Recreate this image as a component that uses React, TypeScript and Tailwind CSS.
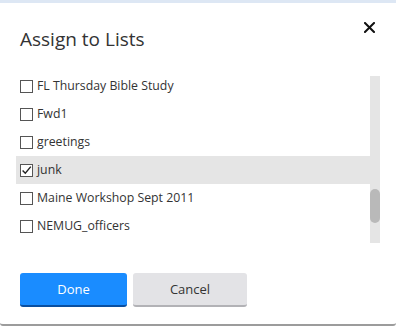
import React from "react";

const items = [
  { label: "FL Thursday Bible Study", checked: false },
  { label: "Fwd1", checked: false },
  { label: "greetings", checked: false },
  { label: "junk", checked: true },
  { label: "Maine Workshop Sept 2011", checked: false },
  { label: "NEMUG_officers", checked: false },
];

function Box({ checked }: { checked: boolean }) {
  return (
    <svg width="13" height="13" viewBox="0 0 13 13" className="shrink-0">
      <rect x="0.5" y="0.5" width="12" height="12" fill="white" stroke="#555" strokeWidth="1" />
      {checked && (
        <path d="M2.6 6.4 L5.3 9.2 L10.8 2.6" fill="none" stroke="#222" strokeWidth="1.4" />
      )}
    </svg>
  );
}

export default function App() {
  return (
    <div
      className="w-[396px] h-[326px] bg-white flex flex-col overflow-hidden"
      style={{ fontFamily: '"Open Sans", "Noto Sans", sans-serif' }}
    >
      <div className="h-[3px] bg-[#dde7f4] shrink-0" />
      <div className="flex-1 relative flex flex-col border-b-2 border-[#9c9c9c] rounded-b-[3px]">
        <button className="absolute left-[363px] top-[18px] w-[13px] h-[13px] flex items-center justify-center">
          <svg width="11" height="11" viewBox="0 0 11 11">
            <path d="M1 1 L10 10 M10 1 L1 10" stroke="#111" strokeWidth="2" strokeLinecap="square" />
          </svg>
        </button>
        <div className="pl-[20px] pt-[22px] h-[73px] text-[19px] leading-[28px] text-[#333]">
          Assign to Lists
        </div>
        <div className="ml-[16px] mr-[16px] h-[167px] flex overflow-hidden">
          <div className="flex-1 flex flex-col -mt-[4px]">
            {items.map((it) => (
              <div
                key={it.label}
                className={`h-[28px] shrink-0 flex items-center gap-[4px] pl-[4px] text-[12.3px] text-[#333] ${
                  it.checked ? "bg-[#e5e5e5]" : ""
                }`}
              >
                <Box checked={it.checked} />
                <span className="pt-[1px]">{it.label}</span>
              </div>
            ))}
          </div>
          <div className="w-[10px] bg-[#e5e5e5] flex flex-col">
            <div className="h-[113px]" />
            <div className="h-[34px] rounded-full bg-[#b9b9b9]" />
          </div>
        </div>
        <div className="flex gap-[6px] pl-[20px] pt-[30px]">
          <button className="w-[107px] h-[34px] pt-[1px] rounded-[3px] bg-[#1a8cff] border-b-2 border-[#0a4fa0] text-white text-[13px]">
            Done
          </button>
          <button className="w-[114px] h-[34px] pt-[1px] rounded-[3px] bg-[#e3e3e6] border-b-2 border-[#b2b2b6] text-[#333] text-[13px]">
            Cancel
          </button>
        </div>
      </div>
    </div>
  );
}
